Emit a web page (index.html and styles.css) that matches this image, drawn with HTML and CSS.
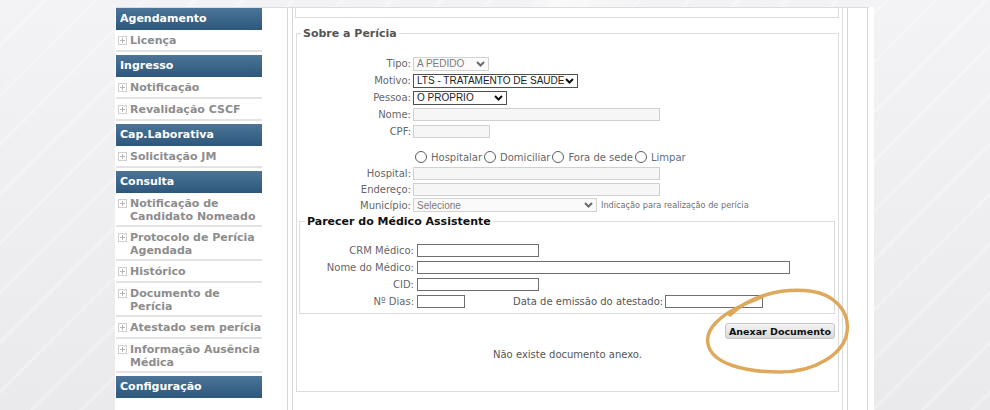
FILE: index.html
```html
<!DOCTYPE html>
<html lang="pt-BR">
<head>
<meta charset="utf-8">
<title>Perícia</title>
<link rel="stylesheet" href="styles.css">
</head>
<body>
<div class="page">
  <div class="layout">
    <nav class="sidebar">
      <div class="grp">
        <div class="hd">Agendamento</div>
        <div class="it"><svg class="pl" viewBox="0 0 9 9"><rect x=".5" y=".5" width="8" height="8"/><path d="M2 4.5h5M4.5 2v5"/></svg><span>Licença</span></div>
      </div>
      <div class="grp">
        <div class="hd">Ingresso</div>
        <div class="it"><svg class="pl" viewBox="0 0 9 9"><rect x=".5" y=".5" width="8" height="8"/><path d="M2 4.5h5M4.5 2v5"/></svg><span>Notificação</span></div>
        <div class="it"><svg class="pl" viewBox="0 0 9 9"><rect x=".5" y=".5" width="8" height="8"/><path d="M2 4.5h5M4.5 2v5"/></svg><span>Revalidação CSCF</span></div>
      </div>
      <div class="grp">
        <div class="hd">Cap.Laborativa</div>
        <div class="it"><svg class="pl" viewBox="0 0 9 9"><rect x=".5" y=".5" width="8" height="8"/><path d="M2 4.5h5M4.5 2v5"/></svg><span>Solicitação JM</span></div>
      </div>
      <div class="grp">
        <div class="hd">Consulta</div>
        <div class="it it2"><svg class="pl" viewBox="0 0 9 9"><rect x=".5" y=".5" width="8" height="8"/><path d="M2 4.5h5M4.5 2v5"/></svg><span>Notificação de<br>Candidato Nomeado</span></div>
        <div class="it it2"><svg class="pl" viewBox="0 0 9 9"><rect x=".5" y=".5" width="8" height="8"/><path d="M2 4.5h5M4.5 2v5"/></svg><span>Protocolo de Perícia<br>Agendada</span></div>
        <div class="it"><svg class="pl" viewBox="0 0 9 9"><rect x=".5" y=".5" width="8" height="8"/><path d="M2 4.5h5M4.5 2v5"/></svg><span>Histórico</span></div>
        <div class="it it2"><svg class="pl" viewBox="0 0 9 9"><rect x=".5" y=".5" width="8" height="8"/><path d="M2 4.5h5M4.5 2v5"/></svg><span>Documento de<br>Perícia</span></div>
        <div class="it"><svg class="pl" viewBox="0 0 9 9"><rect x=".5" y=".5" width="8" height="8"/><path d="M2 4.5h5M4.5 2v5"/></svg><span>Atestado sem perícia</span></div>
        <div class="it it2"><svg class="pl" viewBox="0 0 9 9"><rect x=".5" y=".5" width="8" height="8"/><path d="M2 4.5h5M4.5 2v5"/></svg><span>Informação Ausência<br>Médica</span></div>
      </div>
      <div class="grp">
        <div class="hd">Configuração</div>
      </div>
    </nav>

    <div class="outer">
      <div class="inner">
        <div class="col">
          <div class="topbox"></div>
          <fieldset class="fs-main">
            <legend>Sobre a Perícia</legend>
            <div class="row"><span class="lb">Tipo:</span><div class="sel dis w-tipo"><span>A PEDIDO</span><svg class="chev" viewBox="0 0 9 6"><path d="M1 1l3.5 3.5L8 1"/></svg></div></div>
            <div class="row"><span class="lb">Motivo:</span><div class="sel w-motivo"><span>LTS - TRATAMENTO DE SAUDE</span><svg class="chev" viewBox="0 0 9 6"><path d="M1 1l3.5 3.5L8 1"/></svg></div></div>
            <div class="row"><span class="lb">Pessoa:</span><div class="sel w-pessoa"><span>O PROPRIO</span><svg class="chev" viewBox="0 0 9 6"><path d="M1 1l3.5 3.5L8 1"/></svg></div></div>
            <div class="row"><span class="lb">Nome:</span><div class="txt dis w-long"></div></div>
            <div class="row"><span class="lb">CPF:</span><div class="txt dis w-cpf"></div></div>
            <div class="spacer"></div>
            <div class="row row16 radios">
              <span class="rd"></span><span class="rl">Hospitalar</span>
              <span class="rd"></span><span class="rl">Domiciliar</span>
              <span class="rd"></span><span class="rl">Fora de sede</span>
              <span class="rd"></span><span class="rl limpar">Limpar</span>
            </div>
            <div class="row row16"><span class="lb">Hospital:</span><div class="txt dis w-long"></div></div>
            <div class="row row16"><span class="lb">Endereço:</span><div class="txt dis w-long"></div></div>
            <div class="row row16"><span class="lb">Município:</span><div class="sel dis w-mun"><span>Selecione</span><svg class="chev" viewBox="0 0 9 6"><path d="M1 1l3.5 3.5L8 1"/></svg></div><span class="hint">Indicação para realização de perícia</span></div>

            <fieldset class="fs-sub">
              <legend>Parecer do Médico Assistente</legend>
              <div class="row"><span class="lb lb2">CRM Médico:</span><div class="txt w-crm"></div></div>
              <div class="row"><span class="lb lb2">Nome do Médico:</span><div class="txt w-nome"></div></div>
              <div class="row"><span class="lb lb2">CID:</span><div class="txt w-crm"></div></div>
              <div class="row"><span class="lb lb2">Nº Dias:</span><div class="txt w-dias"></div><span class="data-lb">Data de emissão do atestado:</span><div class="txt w-data"></div></div>
            </fieldset>

            <div class="btnrow"><button class="btn" type="button">Anexar Documento</button></div>
            <p class="empty">Não existe documento anexo.</p>
          </fieldset>
        </div>
      </div>
    </div>
  </div>

  <svg class="mark" viewBox="0 0 160 100" width="160" height="100">
    <path d="M30 31C50 12 80 4 110 7C135 10 150 28 147 48C144 70 115 88 80 88C45 88 12 80 8 60C5 45 20 31 45 20L62 13"/>
  </svg>
</div>
</body>
</html>
```

FILE: styles.css
```css
* { box-sizing: border-box; }

html, body {
  margin: 0;
  height: 100%;
}

body {
  overflow: hidden;
  font-family: "DejaVu Sans", Verdana, sans-serif;
  background:
    linear-gradient(135deg, rgba(255,255,255,0) 0 38%, rgba(255,255,255,.6) 40%, rgba(255,255,255,0) 46%),
    repeating-linear-gradient(135deg, rgba(255,255,255,0) 0 30px, rgba(255,255,255,.35) 32px, rgba(255,255,255,0) 35px),
    linear-gradient(180deg, #f3f3f5 0%, #eaeaec 100%);
}

.page {
  position: relative;
  width: 759px;
  height: 410px;
  margin-left: 115px;
  background: #fff;
}

.layout {
  display: flex;
  width: 753px;
  margin: 7px 0 0 1px;
  border-top: 1px solid #dcdcdc;
}

/* ---------- sidebar ---------- */
.sidebar {
  width: 146px;
  flex: none;
}

.grp { margin-bottom: 3px; }

.hd {
  height: 22px;
  line-height: 22px;
  padding-left: 4px;
  color: #fff;
  font-weight: bold;
  font-size: 11px;
  background: linear-gradient(#4b7497, #2d577b);
}

.it {
  display: flex;
  align-items: flex-start;
  gap: 3px;
  padding: 4px 2px 3px 2px;
  line-height: 13px;
  font-size: 11px;
  font-weight: bold;
  color: #8d8d8d;
  background: #fff;
  border-bottom: 2px solid #e3e3e3;
  white-space: nowrap;
}
.it2 { padding-bottom: 2px; }

.pl {
  flex: none;
  width: 9px;
  height: 9px;
  margin-top: 2px;
}
.pl rect { fill: #fff; stroke: #cfcfcf; stroke-width: 1; }
.pl path { stroke: #b5b5b5; stroke-width: 1; }

/* ---------- main frame ---------- */
.outer {
  width: 581px;
  margin-left: 25px;
  padding-left: 4px;
  border-left: 1px solid #d6d6d6;
  border-right: 1px solid #d6d6d6;
  height: 403px;
}

.inner {
  width: 556px;
  height: 100%;
  padding: 0 4px 0 2px;
  border-left: 1px solid #d6d6d6;
  border-right: 1px solid #d6d6d6;
}

.col {
  height: 100%;
  border-right: 1px solid #dcdcdc;
}

.topbox {
  width: 544px;
  height: 10px;
  border: 1px solid #dcdcdc;
  border-top: none;
}

fieldset {
  margin: 0;
  padding: 0;
  border: 1px solid #dcdcdc;
}

.fs-main {
  width: 543px;
  margin: 9px 0 0 1px;
  padding-top: 15px;
  padding-bottom: 30px;
}

.fs-main > legend {
  margin-left: 4px;
  padding: 0 2px;
  font-size: 11px;
  line-height: 13px;
  font-weight: bold;
  color: #555;
}

.row {
  display: flex;
  align-items: center;
  height: 17px;
  font-size: 10px;
  color: #666;
}
.row16 { height: 16px; }

.lb {
  width: 114px;
  margin-right: 2px;
  text-align: right;
  white-space: nowrap;
}
.lb2 { margin-right: 3px; }

.spacer { height: 9px; }

/* fake select */
.sel {
  display: flex;
  align-items: center;
  justify-content: space-between;
  height: 14px;
  padding: 0 3px 0 3px;
  border: 1px solid #4f4f4f;
  background: #fff;
  font-family: "Liberation Sans", Arial, sans-serif;
  font-size: 10px;
  color: #222;
  white-space: nowrap;
}
.sel .chev {
  width: 9px;
  height: 6px;
  flex: none;
  fill: none;
  stroke: #111;
  stroke-width: 2;
}
.sel.dis {
  border-color: #d2d2d2;
  color: #7a7a7a;
  background: #fafafa;
}
.sel.dis .chev { stroke: #6a6a6a; }

.w-tipo { width: 76px; }
.w-motivo { width: 165px; }
.w-pessoa { width: 94px; }
.w-mun { width: 184px; }

/* fake text inputs */
.txt {
  height: 13px;
  border: 1px solid #6f6f6f;
  background: #fff;
}
.txt.dis {
  border-color: #d0d0d0;
  background: #f6f6f6;
}
.w-long { width: 247px; }
.w-cpf { width: 77px; }
.w-crm { width: 122px; }
.w-nome { width: 373px; }
.w-dias { width: 48px; }
.w-data { width: 98px; margin-left: 2px; }

.data-lb { margin-left: 48px; color: #555; }

.hint {
  margin-left: 4px;
  font-size: 8.2px;
  color: #6f6f6f;
}

/* radios */
.radios { padding-left: 118px; }
.rd {
  width: 12px;
  height: 12px;
  flex: none;
  border: 1px solid #5c5c5c;
  border-radius: 50%;
  background: #fff;
}
.rl { margin: 0 2px 0 4px; color: #666; }
.limpar { color: #5d7084; }

/* parecer */
.fs-sub {
  margin: 2px 3px 0 2px;
  padding-top: 14px;
  padding-bottom: 3px;
}
.fs-sub > legend {
  margin-left: 5px;
  padding: 0 2px;
  font-size: 11px;
  line-height: 13px;
  font-weight: bold;
  color: #111;
}

.btnrow {
  display: flex;
  justify-content: flex-end;
  margin: 9px 3px 0 0;
}

.btn {
  width: 110px;
  height: 16px;
  padding: 0;
  border: 1px solid #c6c6c6;
  border-radius: 3px;
  background: linear-gradient(#f4f4f4, #d9d9d9);
  font-family: "DejaVu Sans", Verdana, sans-serif;
  font-size: 9.5px;
  font-weight: bold;
  color: #111;
}

.empty {
  margin: 9px 0 0 0;
  text-align: center;
  font-size: 10px;
  line-height: 13px;
  color: #555;
}

.mark {
  position: absolute;
  left: 585px;
  top: 277px;
  fill: none;
  stroke: #dea555;
  stroke-width: 3.5;
  stroke-linecap: round;
  stroke-linejoin: round;
  opacity: .95;
}
```
